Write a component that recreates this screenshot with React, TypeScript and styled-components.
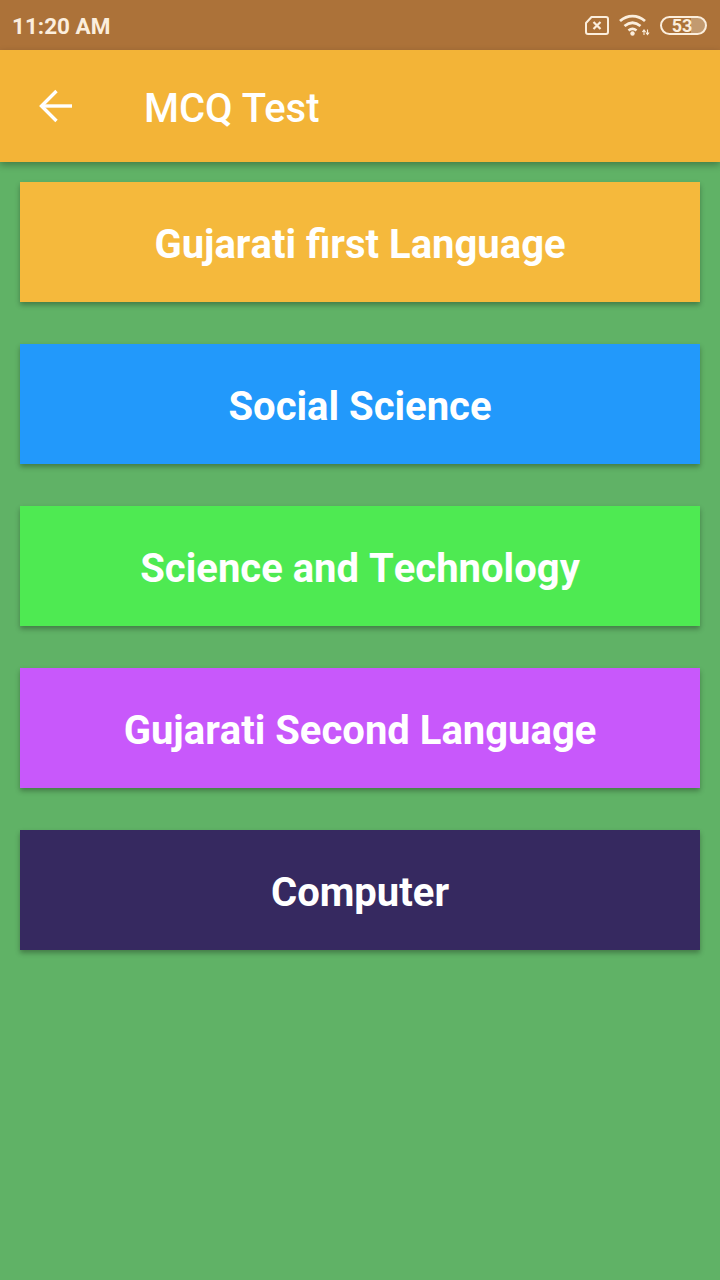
import React from 'react';
import styled, { createGlobalStyle } from 'styled-components';

const GlobalStyle = createGlobalStyle`
  html, body {
    margin: 0;
    padding: 0;
    background: #60b266;
    font-family: Roboto, "Noto Sans", sans-serif;
  }
`;

const Screen = styled.div`
  width: 720px;
  height: 1280px;
  display: flex;
  flex-direction: column;
  background: #60b266;
  overflow: hidden;
`;

const StatusBar = styled.div`
  height: 50px;
  flex: none;
  display: flex;
  align-items: center;
  justify-content: space-between;
  padding: 0 12px;
  background: #ac7239;
  color: #fbeedd;
`;

const Clock = styled.span`
  font-size: 22.500px;
  font-weight: 700;
  line-height: 50px;
  padding-top: 2px;
`;

const StatusIcons = styled.div`
  display: flex;
  align-items: center;
  gap: 10px;
  margin-right: 1px;
`;

const AppBar = styled.header`
  height: 112px;
  flex: none;
  display: flex;
  align-items: center;
  background: #f3b437;
  box-shadow: 0 3px 7px rgba(0, 0, 0, 0.3);
  position: relative;
  color: #fff;
`;

const BackButton = styled.div`
  width: 144px;
  flex: none;
  display: flex;
  padding-left: 39px;
  box-sizing: border-box;
`;

const Title = styled.h1`
  margin: 0;
  padding-top: 6px;
  font-size: 40px;
  font-weight: 500;
  line-height: 1;
`;

const List = styled.main`
  display: flex;
  flex-direction: column;
  gap: 42px;
  padding: 20px 20px 0;
`;

const Subject = styled.button<{ $bg: string }>`
  height: 120px;
  border: 0;
  padding: 4px 0 0;
  background: ${(p) => p.$bg};
  color: #fff;
  font-family: inherit;
  font-size: 40px;
  font-weight: 700;
  font-kerning: none;
  box-shadow: 0 3px 5px rgba(0, 0, 0, 0.3);
`;

const subjects = [
  { name: 'Gujarati first Language', color: '#f5b93c' },
  { name: 'Social Science', color: '#2299fb' },
  { name: 'Science and Technology', color: '#4eea52' },
  { name: 'Gujarati Second Language', color: '#c858fb' },
  { name: 'Computer', color: '#362960' },
];

const SimIcon = () => (
  <svg width="24" height="19" viewBox="0 0 24 19" fill="none" stroke="#fbeedd" strokeWidth="2">
    <path d="M6.500 1H21a2 2 0 0 1 2 2v13a2 2 0 0 1-2 2H3a2 2 0 0 1-2-2V7z" strokeLinejoin="round" />
    <path d="M8.500 6l7 7M15.500 6l-7 7" strokeWidth="2.200" />
  </svg>
);

// wifi arcs plus the little up/down data arrows at the lower right
const WifiIcon = () => (
  <svg width="31" height="22" viewBox="0 0 31 22" fill="none" stroke="#fbeedd" strokeWidth="2.800">
    <path d="M1 7C8.500 0.500 18.500 0.500 26 7" />
    <path d="M5.500 12c5-4 11-4 16 0" />
    <path d="M9.500 16.500c2.500-2 5.500-2 8 0" />
    <circle cx="13.500" cy="19.500" r="2.200" fill="#fbeedd" stroke="none" />
    <path d="M25 21v-4.500M23.400 18l1.600-2 1.600 2M28.500 15.500V20M26.900 18.500l1.600 2 1.600-2" strokeWidth="1.100" />
  </svg>
);

const Battery = styled.div`
  width: 47px;
  height: 19px;
  box-sizing: border-box;
  border: 2px solid #fbeedd;
  border-radius: 10px;
  display: flex;
  align-items: center;
  justify-content: center;
  padding-right: 3px;
  background: linear-gradient(to right, transparent 68%, #c29a70 68%);
  font-size: 18px;
  font-weight: 700;
  color: #fbeedd;
`;

const BackArrow = () => (
  <svg width="34" height="34" viewBox="0 0 34 34" fill="none" stroke="#fff" strokeWidth="3.400">
    <path d="M33 17H3" />
    <path d="M17.500 2L2.500 17l15 15" />
  </svg>
);

const App: React.FC = () => {
  return (
    <Screen>
      <GlobalStyle />
      <StatusBar>
        <Clock>11:20 AM</Clock>
        <StatusIcons>
          <SimIcon />
          <WifiIcon />
          <Battery>53</Battery>
        </StatusIcons>
      </StatusBar>
      <AppBar>
        <BackButton>
          <BackArrow />
        </BackButton>
        <Title>MCQ Test</Title>
      </AppBar>
      <List>
        {subjects.map((s) => (
          <Subject key={s.name} $bg={s.color}>
            {s.name}
          </Subject>
        ))}
      </List>
    </Screen>
  );
};

export default App;
